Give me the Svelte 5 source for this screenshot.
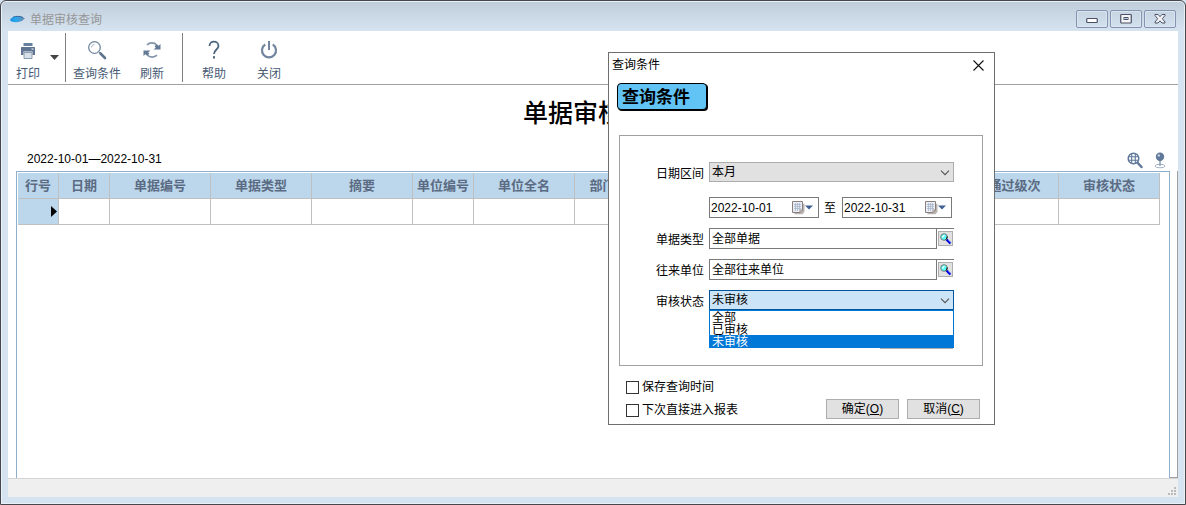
<script>
  let range = $state('本月')
  let from = $state('2022-10-01')
  let to = $state('2022-10-31')
  let billType = $state('全部单据')
  let unit = $state('全部往来单位')
  let status = $state('未审核')
  let open = $state(true)
  let showDialog = $state(true)
  let saveTime = $state(false)
  let direct = $state(false)

  const statuses = ['全部', '已审核', '未审核']

  const columns = [
    { name: '行号', width: 41 },
    { name: '日期', width: 51 },
    { name: '单据编号', width: 101 },
    { name: '单据类型', width: 101 },
    { name: '摘要', width: 101 },
    { name: '单位编号', width: 61 },
    { name: '单位全名', width: 101 },
    { name: '部门', width: 56 },
    { name: '', width: 101 },
    { name: '', width: 101 },
    { name: '', width: 138 },
    { name: '通过级次', width: 88 },
    { name: '审核状态', width: 101 }
  ]

  function pick(s) {
    status = s
    open = false
  }
</script>

{#snippet chevron()}
  <svg class="chevron" width="10" height="6" viewBox="0 0 10 6"><path d="M1 .7l4 4 4-4" fill="none" stroke="#555" stroke-width="1.1" /></svg>
{/snippet}

{#snippet calendar()}
  <svg width="22" height="14" viewBox="0 0 22 14">
    <path d="M2 2h10v8l-2 2.500H2z" fill="#b9b4b2" transform="translate(.5 .8)" />
    <path d="M.5.5h10v8.500l-2.500 2.500H.5z" fill="#e9eef6" stroke="#8a7f7c" />
    <path d="M2 3.500h7M2 5.500h7M2 7.500h7M3.500 2v8M5.500 2v8M7.500 2v7" stroke="#a9b6cc" stroke-width=".8" />
    <path d="M10.500 9l-2.500 2.500V9z" fill="#fff" stroke="#8a7f7c" stroke-width=".8" />
    <path d="M13 4.500h8l-4 4z" fill="#3f5f95" />
  </svg>
{/snippet}

{#snippet lens()}
  <svg width="13" height="13" viewBox="0 0 13 13">
    <path d="M7.500 7.500l4 4" stroke="#0000d8" stroke-width="2.400" />
    <path d="M9 8l3 3" stroke="#4a6cff" stroke-width=".8" />
    <circle cx="5" cy="5" r="3.300" fill="#5ff" stroke="#777" />
    <path d="M3.200 5.500L5.500 3.200" stroke="#fff" stroke-width="1.200" />
    <path d="M7 7.500a4 4 0 0 0 1.200-3" fill="none" stroke="#000" />
  </svg>
{/snippet}

<div class="window">
  <header class="titlebar">
    <svg class="logo" width="17" height="10" viewBox="0 0 17 10">
      <defs><linearGradient id="sea"><stop offset="0" stop-color="#1d8fe0" /><stop offset=".4" stop-color="#2aa9ee" /><stop offset="1" stop-color="#6f86ae" /></linearGradient></defs>
      <path d="M1 6c1-3 5-4 8-3.800S15 3.200 16 4.700c-2 .5-2 1.800-4 2.600-4 1.500-10 1.200-11-1.300z" fill="url(#sea)" />
      <path d="M4 3.200c3-1.200 7-1.200 10 .3" stroke="#356b9c" fill="none" />
    </svg>
    <span class="caption">单据审核查询</span>
    <button aria-label="最小化"><svg width="12" height="12" viewBox="0 0 12 12"><rect x=".75" y="5.500" width="10.500" height="4" rx=".8" fill="#fff" stroke="#4b4f63" stroke-width="1.200" /></svg></button>
    <button aria-label="最大化"><svg width="12" height="12" viewBox="0 0 12 12"><rect x=".75" y="1.500" width="10.500" height="8.500" rx=".8" fill="#f5f5f8" stroke="#4b4f63" stroke-width="1.200" /><rect x="4" y="4.500" width="4" height="2" fill="#b9c9da" stroke="#4b4f63" /></svg></button>
    <button aria-label="关闭窗口"><svg width="12" height="12" viewBox="0 0 12 12"><path d="M1 1.500h3L6 3.700l2-2.200h3v1L8.300 5.700 11 9v1H8L6 7.800 4 10H1V9l2.700-3.300L1 2.500z" fill="#f5f5f8" stroke="#4b4f63" /></svg></button>
  </header>

  <main>
    <nav class="toolbar">
      <div class="group print">
        <button class="tool">
          <svg width="18" height="18" viewBox="0 0 18 18">
            <path d="M4.500 1h9v3h-9z" fill="#66809e" />
            <path d="M2.700 5h12.600q.7 0 .7.700V13h-2.500V9.500h-9V13H2V5.700q0-.7.7-.7z" fill="#5f7490" />
            <path d="M5 10.500h8v6H5z" fill="#d7dfe8" stroke="#8a9cb2" />
            <path d="M12.500 7h2" stroke="#fff" />
          </svg>
          打印
        </button>
        <button class="more" aria-label="打印选项"><svg width="9" height="5" viewBox="0 0 9 5"><path d="M0 0h9L4.500 5z" fill="#444" /></svg></button>
      </div>
      <div class="group">
        <button class="tool wide" onclick={() => (showDialog = true)}>
          <svg width="20" height="20" viewBox="0 0 20 20">
            <circle cx="7.500" cy="7.500" r="5.800" fill="#fff" stroke="#72879f" stroke-width="1.300" />
            <path d="M4.500 7.500a3 3 0 0 1 3-3" fill="none" stroke="#a7b4c4" />
            <path d="M12 12l2 2" stroke="#72879f" />
            <path d="M13.500 13.500l4.500 4.500" stroke="#5d738e" stroke-width="2.600" stroke-linecap="round" />
          </svg>
          查询条件
        </button>
        <button class="tool">
          <svg width="20" height="20" viewBox="0 0 20 20">
            <path d="M5 4.800a7 7 0 0 1 9.800.2M15 15.200a7 7 0 0 1-9.800-.2" fill="none" stroke="#8496ab" stroke-width="1.700" />
            <path d="M18.500 4v5.500h-7l2.200-1.800-1-1.700 2.300-1.500 1.700 1.300zM1.500 16v-5.500h7l-2.200 1.800 1 1.700L5 15.500l-1.700-1.300z" fill="#647a95" />
          </svg>
          刷新
        </button>
      </div>
      <div class="group">
        <button class="tool">
          <svg width="20" height="20" viewBox="0 0 20 20">
            <path d="M5.500 6c0-2.600 1.800-4.300 4.400-4.300S14.500 3.400 14.500 6c0 3.300-4.500 3.800-4.500 8" fill="none" stroke="#4e6580" stroke-width="1.800" />
            <rect x="9" y="16.200" width="2" height="2.300" fill="#4e6580" />
          </svg>
          帮助
        </button>
        <button class="tool">
          <svg width="20" height="20" viewBox="0 0 20 20">
            <path d="M6.200 4.500a7 7 0 1 0 7.600 0" fill="none" stroke="#72879f" stroke-width="2.200" />
            <path d="M10 1v9" stroke="#72879f" stroke-width="2" />
          </svg>
          关闭
        </button>
      </div>
    </nav>

    <h1>单据审核查询</h1>

    <div class="info">
      <span>2022-10-01—2022-10-31</span>
      <button aria-label="放大">
        <svg width="16" height="17" viewBox="0 0 16 17">
          <circle cx="6.500" cy="6.500" r="5.300" fill="#fff" stroke="#60789a" stroke-width="1.500" />
          <path d="M2 4.700h9M2 8.300h9M4.700 2v9M8.300 2v9" stroke="#60789a" stroke-width="1.100" />
          <path d="M10.800 11l3.700 4" stroke="#60789a" stroke-width="2.500" stroke-linecap="round" />
        </svg>
      </button>
      <button aria-label="固定">
        <svg width="12" height="17" viewBox="0 0 12 17">
          <ellipse cx="6" cy="14" rx="5" ry="1.800" fill="#fff" stroke="#a3b2c6" />
          <path d="M6 8v6" stroke="#8a9cb5" stroke-width="1.500" />
          <circle cx="6" cy="4.800" r="4.200" fill="#60789a" />
          <circle cx="4.800" cy="3.500" r="1.200" fill="#c5d1e0" />
        </svg>
      </button>
    </div>

    <div class="body">
      <div class="grid">
        <table>
          <colgroup>
            {#each columns as col}
              <col style="width: {col.width}px" />
            {/each}
          </colgroup>
          <thead>
            <tr>
              {#each columns as col}
                <th>{col.name}</th>
              {/each}
            </tr>
          </thead>
          <tbody>
            <tr>
              {#each columns as col, i}
                <td class:marker={i === 0}>
                  {#if i === 0}<svg width="6" height="11" viewBox="0 0 6 11"><path d="M0 0l6 5.500L0 11z" /></svg>{/if}
                </td>
              {/each}
            </tr>
          </tbody>
        </table>
      </div>
      <div class="edge"></div>
    </div>

    <footer>
      <svg width="8" height="8" viewBox="0 0 8 8"><path d="M6 0h2v2H6zM3 3h2v2H3zM6 3h2v2H6zM0 6h2v2H0zM3 6h2v2H3zM6 6h2v2H6z" fill="#bbb" /></svg>
    </footer>
  </main>

  {#if showDialog}
    <section class="dialog" role="dialog" aria-label="查询条件">
      <div class="head">
        <span>查询条件</span>
        <button aria-label="关闭" onclick={() => (showDialog = false)}>
          <svg width="11" height="11" viewBox="0 0 11 11"><path d="M.5.5l10 10M10.500.5l-10 10" stroke="#111" stroke-width="1.100" /></svg>
        </button>
      </div>
      <h2>查询条件</h2>

      <div class="panel">
        <div class="field">
          <label for="range">日期区间</label>
          <div class="combo">
            <select id="range" bind:value={range}>
              <option>本月</option>
              <option>上月</option>
            </select>
            {@render chevron()}
          </div>
        </div>
        <div class="field dates">
          <div class="date">
            <input aria-label="开始日期" bind:value={from} />
            <button aria-label="选择开始日期">{@render calendar()}</button>
          </div>
          <span>至</span>
          <div class="date">
            <input aria-label="结束日期" bind:value={to} />
            <button aria-label="选择结束日期">{@render calendar()}</button>
          </div>
        </div>
        <div class="field">
          <label for="type">单据类型</label>
          <div class="lookup">
            <input id="type" bind:value={billType} />
            <button aria-label="选择单据类型">{@render lens()}</button>
          </div>
        </div>
        <div class="field">
          <label for="unit">往来单位</label>
          <div class="lookup">
            <input id="unit" bind:value={unit} />
            <button aria-label="选择往来单位">{@render lens()}</button>
          </div>
        </div>
        <div class="field">
          <label for="status">审核状态</label>
          <div class="combo active">
            <select id="status" bind:value={status} onclick={() => (open = !open)}>
              {#each statuses as s}
                <option>{s}</option>
              {/each}
            </select>
            {@render chevron()}
            {#if open}
              <div class="menu">
                {#each statuses as s}
                  <button class:selected={s === status} onclick={() => pick(s)}>{s}</button>
                {/each}
              </div>
            {/if}
          </div>
        </div>
      </div>

      <div class="bottom">
        <div class="checks">
          <label><input type="checkbox" bind:checked={saveTime} />保存查询时间</label>
          <label><input type="checkbox" bind:checked={direct} />下次直接进入报表</label>
        </div>
        <button onclick={() => (showDialog = false)}>确定(<u>O</u>)</button>
        <button onclick={() => (showDialog = false)}>取消(<u>C</u>)</button>
      </div>
    </section>
  {/if}
</div>

<style>
:global(body) {
  margin: 0;
  background: #d6e4f1;
}
.window, .window * {
  box-sizing: border-box;
}
.window {
  position: relative;
  display: flex;
  flex-direction: column;
  min-height: 100vh;
  padding: 0 7px 7px;
  border: 1px solid #48484c;
  border-radius: 6px 6px 0 0;
  background: linear-gradient(#bfccda, #d6e4f1 30px);
  box-shadow: inset 0 0 0 1px #e9f1f8;
  font: 12px/16px "Liberation Sans", "Noto Sans CJK SC", sans-serif;
  color: #000;
}
button, input, select {
  margin: 0;
  padding: 0;
  border: 0;
  border-radius: 0;
  background: none;
  font: inherit;
  color: inherit;
  outline: 0;
}
svg {
  display: block;
}
.titlebar {
  display: flex;
  align-items: center;
  gap: 2px;
  height: 30px;
  padding: 6px 2px 0 1px;
}
.caption {
  flex: 1;
  padding: 1px 0 0 2px;
  color: #969696;
}
.titlebar button {
  display: flex;
  align-items: center;
  justify-content: center;
  width: 32px;
  height: 18px;
  border: 1px solid #8494b0;
  border-radius: 2px;
  box-shadow: inset 0 0 0 1px #dbe5ef;
}
main {
  flex: 1;
  display: flex;
  flex-direction: column;
  background: #fff;
}
.toolbar {
  display: flex;
  height: 54px;
  padding: 2px 0;
  border-bottom: 1px solid #a0a0a0;
  color: #475a75;
}
.group {
  display: flex;
  gap: 6px;
  padding: 0 6px;
  border-right: 1px solid #808080;
}
.group:last-child {
  gap: 7px;
  padding: 0 7px;
  border: 0;
}
.group.print {
  gap: 2px;
  padding: 0 6px 0 0;
}
.tool {
  display: flex;
  flex-direction: column;
  align-items: center;
  justify-content: flex-end;
  gap: 6px;
  width: 48px;
}
.print .tool {
  width: 40px;
}
.wide {
  width: 50px;
}
.more {
  align-self: center;
}
h1 {
  margin: 0;
  padding: 12px 0 0 10px;
  text-align: center;
  font-size: 25px;
  line-height: 32px;
  font-weight: 500;
}
.info {
  display: flex;
  align-items: center;
  gap: 11px;
  margin-top: 20px;
  padding: 0 12px 0 19px;
  height: 22px;
}
.info span {
  flex: 1;
  padding-bottom: 3px;
}
.body {
  flex: 1;
  display: flex;
  padding-left: 8px;
}
.grid {
  flex: 1;
  padding: 1px;
  border: 1px solid #8fafcc;
  border-bottom: 0;
}
.edge {
  width: 8px;
  border-right: 1px solid #a0a0a0;
  border-bottom: 1px solid #a0a0a0;
}
table {
  width: 1142px;
  table-layout: fixed;
  border-collapse: separate;
  border-spacing: 0;
}
th, td {
  height: 26px;
  padding: 0;
  border-right: 1px solid #c0c0c0;
  border-bottom: 1px solid #c0c0c0;
}
th {
  background: #bcd7ec;
  color: #5b6b83;
  font-size: 13px;
  line-height: 16px;
}
.marker {
  background: #bcd7ec;
}
.marker svg {
  margin-left: auto;
  margin-right: 1px;
}
footer {
  display: flex;
  justify-content: flex-end;
  align-items: flex-end;
  height: 19px;
  padding: 2px;
  border-top: 1px solid #d4d4d4;
  background: #efefef;
}
.dialog {
  position: absolute;
  top: 51px;
  left: 607px;
  width: 387px;
  padding: 0 11px 5px 10px;
  border: 1px solid #6e6e6e;
  background: #fff;
}
.head {
  display: flex;
  justify-content: space-between;
  align-items: center;
  height: 24px;
  margin: 0 -1px 0 -7px;
}
h2 {
  width: 90px;
  height: 27px;
  margin: 6px 0 0 -2px;
  padding-left: 4px;
  border: 1px solid #000;
  border-radius: 4px;
  background: #62c3f5;
  box-shadow: 1px 1px #000;
  font-size: 17px;
  line-height: 27px;
}
.panel {
  display: flex;
  flex-direction: column;
  gap: 10px;
  height: 231px;
  margin-top: 25px;
  padding: 26px 28px 0 36px;
  border: 1px solid #a0a0a0;
}
.field {
  display: flex;
  align-items: center;
}
.field label {
  width: 53px;
  padding-top: 3px;
}
.combo {
  position: relative;
  flex: 1;
  height: 20px;
}
.combo select {
  width: 100%;
  height: 20px;
  padding-left: 2px;
  appearance: none;
  border: 1px solid #adadad;
  background: #e1e1e1;
}
.combo.active select {
  border-color: #005499;
  background: #cce4f7;
}
.chevron {
  position: absolute;
  top: 8px;
  right: 4px;
  pointer-events: none;
}
.menu {
  position: absolute;
  top: 20px;
  left: 0;
  right: 0;
  display: flex;
  flex-direction: column;
  border: 1px solid #0078d7;
  background: #fff;
}
.menu::after {
  content: "";
  position: absolute;
  top: 100%;
  right: 0;
  width: 73px;
  height: 1px;
  margin-top: 1px;
  background: #adadad;
}
.menu button {
  height: 12px;
  padding-left: 2px;
  text-align: left;
  line-height: 14px;
}
.menu .selected {
  background: #0078d7;
  color: #fff;
}
.dates {
  gap: 5px;
  margin: 5px 0 0 53px;
}
.dates > span {
  width: 13px;
}
.date {
  display: flex;
  align-items: center;
  width: 110px;
  height: 21px;
  padding-right: 4px;
  border: 1px solid #7a7a7a;
}
.date input {
  flex: 1;
  min-width: 0;
  padding-left: 1px;
}
.lookup {
  flex: 1;
  display: flex;
  height: 21px;
  border-top: 1px solid #7a7a7a;
}
.lookup input {
  flex: 1;
  padding: 0 2px;
  border: 1px solid #7a7a7a;
  border-top: 0;
}
.lookup button {
  width: 15px;
  height: 15px;
  margin: 2px 1px;
  border: 1px solid #adadad;
  background: #e1e1e1;
}
.bottom {
  display: flex;
  align-items: flex-end;
  gap: 8px;
  margin-top: 13px;
}
.checks {
  flex: 1;
  display: flex;
  flex-direction: column;
  gap: 7px;
  padding: 0 0 1px 7px;
}
.checks label {
  display: flex;
  align-items: center;
  gap: 3px;
}
.checks input {
  width: 13px;
  height: 13px;
  appearance: none;
  border: 1px solid #333;
}
.checks input:checked {
  background: #0078d7;
}
.bottom button {
  width: 73px;
  height: 20px;
  border: 1px solid #adadad;
  background: #e1e1e1;
}
.bottom button:last-child {
  margin-right: 3px;
}
</style>
